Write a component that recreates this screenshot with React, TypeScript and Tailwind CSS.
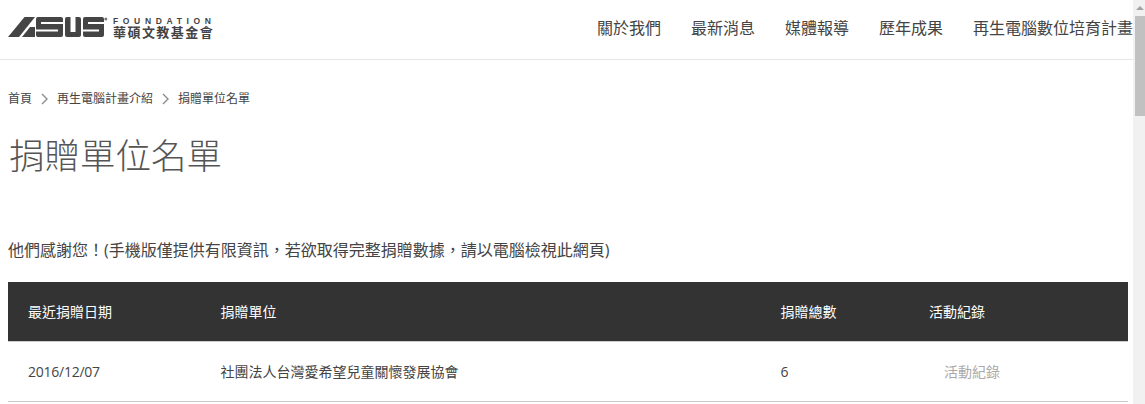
const CJK = "font-['Open_Sans','Noto_Sans_CJK_TC',sans-serif]"

const navItems = ["關於我們", "最新消息", "媒體報導", "歷年成果", "再生電腦數位培育計畫"]

const AsusLogo = () => (
  <svg width="100" height="20" viewBox="0 0 100 20" className="block shrink-0">
    <g fill="#454545">
      <polygon points="0,20 16.500,0 27,0 11,20" />
      <polygon points="14,20 22,10 27,10 27,20" />
      <rect x="28" y="0" width="27" height="20" rx="2" />
      <rect x="57" y="0" width="16" height="20" rx="2" />
      <rect x="75" y="0" width="21" height="20" rx="2" />
    </g>
    <g stroke="#fff" fill="none">
      <path d="M55 6H33" strokeWidth="2" />
      <path d="M28 13.500H50" strokeWidth="2" />
      <path d="M65 0V15" strokeWidth="5" />
      <path d="M96 6H80" strokeWidth="2" />
      <path d="M75 13.500H91" strokeWidth="2" />
    </g>
    <circle cx="97.800" cy="2" r="1.500" fill="#777" />
  </svg>
)

const Header = () => (
  <header className="flex h-[60px] items-center justify-between border-b border-[#e5e5e5] pl-2">
    <div className="mb-[4px] flex items-start gap-[5px]">
      <AsusLogo />
      <div className="flex flex-col">
        <span className="font-['Liberation_Sans',sans-serif] text-[8.500px] leading-[8px] font-bold tracking-[4.650px] whitespace-nowrap text-[#444]">
          FOUNDATION
        </span>
        <span className="font-['Noto_Sans_CJK_TC',sans-serif] text-[13px] leading-[13px] font-bold tracking-[1.450px] whitespace-nowrap text-[#444]">
          華碩文教基金會
        </span>
      </div>
    </div>
    <nav className="flex gap-[30px] pb-[4px]">
      {navItems.map((item) => (
        <a key={item} className="text-[16px] leading-5 whitespace-nowrap text-[#444]">
          {item}
        </a>
      ))}
    </nav>
  </header>
)

const Chevron = () => (
  <svg width="8" height="12" viewBox="0 0 8 12" fill="none" stroke="#8c8c8c" strokeWidth="1.400" className="mx-[8.500px]">
    <path d="M1 1l5 5-5 5" />
  </svg>
)

const Breadcrumb = () => (
  <div className="flex items-center pt-[31px] pl-2 text-[12px] leading-4 text-[#444]">
    <span>首頁</span>
    <Chevron />
    <span>再生電腦計畫介紹</span>
    <Chevron />
    <span>捐贈單位名單</span>
  </div>
)

const Scrollbar = () => (
  <div className="flex h-full w-3 shrink-0 flex-col items-end bg-[#f1f1f1]">
    <div className="flex h-4 w-full justify-center pt-[6px] pl-[2px]">
      <div className="h-0 w-0 border-x-[4px] border-b-[4px] border-x-transparent border-b-[#a3a3a3]" />
    </div>
    <div className="h-[100px] w-[10px] bg-[#c1c1c1]" />
  </div>
)

export default function App() {
  return (
    <div className={`flex h-[404px] w-[1145px] overflow-hidden bg-white ${CJK}`}>
      <main className="w-[1133px] shrink-0">
        <Header />
        <Breadcrumb />
        <h1 className="pt-[25px] pl-[9px] text-[35.500px] leading-[46px] font-light text-[#555]">
          捐贈單位名單
        </h1>
        <p className="pt-[62px] pl-2 text-[16px] leading-5 text-[#444]">
          他們感謝您！(手機版僅提供有限資訊，若欲取得完整捐贈數據，請以電腦檢視此網頁)
        </p>
        <div className="mt-[22px] mr-[5px] ml-2">
          <div className="grid h-[60px] grid-cols-[192.500px_560px_148.500px_1fr] items-center border-b border-[#ccc] bg-[#333] pl-5 text-[14px] text-white">
            <span>最近捐贈日期</span>
            <span>捐贈單位</span>
            <span>捐贈總數</span>
            <span>活動紀錄</span>
          </div>
          <div className="grid h-[60px] grid-cols-[192.500px_560px_148.500px_1fr] items-center border-b border-[#ccc] pl-5 text-[14px] text-[#444]">
            <span className="tracking-[-0.250px]">2016/12/07</span>
            <span>社團法人台灣愛希望兒童關懷發展協會</span>
            <span>6</span>
            <span className="pl-[15px] text-[#aaa]">活動紀錄</span>
          </div>
        </div>
      </main>
      <Scrollbar />
    </div>
  )
}
